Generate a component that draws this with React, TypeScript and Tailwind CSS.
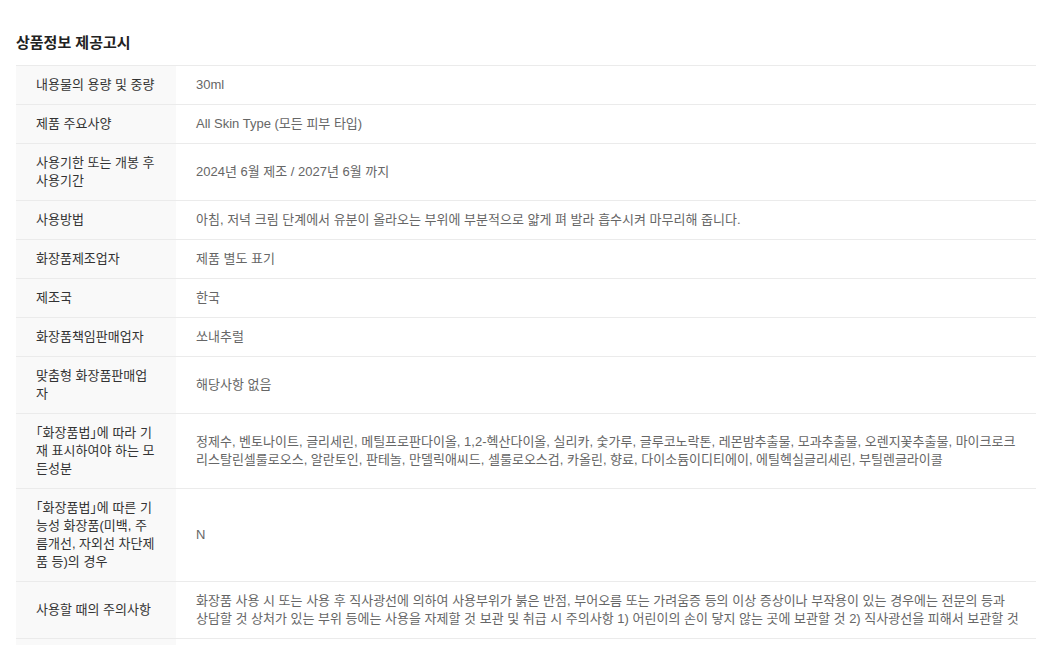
const ROWS: { label: string; value: string; keep?: boolean }[] = [
  { label: "내용물의 용량 및 중량", value: "30ml" },
  { label: "제품 주요사양", value: "All Skin Type (모든 피부 타입)" },
  { label: "사용기한 또는 개봉 후 사용기간", value: "2024년 6월 제조 / 2027년 6월 까지" },
  {
    label: "사용방법",
    value: "아침, 저녁 크림 단계에서 유분이 올라오는 부위에 부분적으로 얇게 펴 발라 흡수시켜 마무리해 줍니다.",
  },
  { label: "화장품제조업자", value: "제품 별도 표기" },
  { label: "제조국", value: "한국" },
  { label: "화장품책임판매업자", value: "쏘내추럴" },
  { label: "맞춤형 화장품판매업자", value: "해당사항 없음" },
  {
    label: "「화장품법」에 따라 기재 표시하여야 하는 모든성분",
    value:
      "정제수, 벤토나이트, 글리세린, 메틸프로판다이올, 1,2-헥산다이올, 실리카, 숯가루, 글루코노락톤, 레몬밤추출물, 모과추출물, 오렌지꽃추출물, 마이크로크리스탈린셀룰로오스, 알란토인, 판테놀, 만델릭애씨드, 셀룰로오스검, 카올린, 향료, 다이소듐이디티에이, 에틸헥실글리세린, 부틸렌글라이콜",
  },
  { label: "「화장품법」에 따른 기능성 화장품(미백, 주름개선, 자외선 차단제품 등)의 경우", value: "N" },
  {
    label: "사용할 때의 주의사항",
    value:
      "화장품 사용 시 또는 사용 후 직사광선에 의하여 사용부위가 붉은 반점, 부어오름 또는 가려움증 등의 이상 증상이나 부작용이 있는 경우에는 전문의 등과 상담할 것 상처가 있는 부위 등에는 사용을 자제할 것 보관 및 취급 시 주의사항 1) 어린이의 손이 닿지 않는 곳에 보관할 것 2) 직사광선을 피해서 보관할 것",
    keep: true,
  },
];

export default function App() {
  return (
    <div className="min-h-screen bg-white px-4 pt-[33px] font-['Liberation_Sans','Noto_Sans_CJK_KR',sans-serif] [font-feature-settings:'halt']">
      <h2 className="mb-3 text-[15px] font-bold leading-5 text-[#222]">상품정보 제공고시</h2>

      <div className="w-[1020px]">
        {ROWS.map((row) => (
          <div key={row.label} className="flex border-t border-[#ebebeb] text-[13px] leading-[18px]">
            <div className="flex w-[160px] shrink-0 items-center bg-[#f9f9f9] px-5 py-[10px] text-[#333]">
              {row.label}
            </div>
            <div
              className={`flex flex-1 items-center py-[10px] pl-5 pr-3 text-[#666] ${
                row.keep ? "break-keep" : ""
              }`}
            >
              {row.value}
            </div>
          </div>
        ))}
        {/* next row peeks in at the bottom edge */}
        <div className="flex h-[40px] border-t border-[#ebebeb]">
          <div className="w-[160px] shrink-0 bg-[#f9f9f9]" />
        </div>
      </div>
    </div>
  );
}
